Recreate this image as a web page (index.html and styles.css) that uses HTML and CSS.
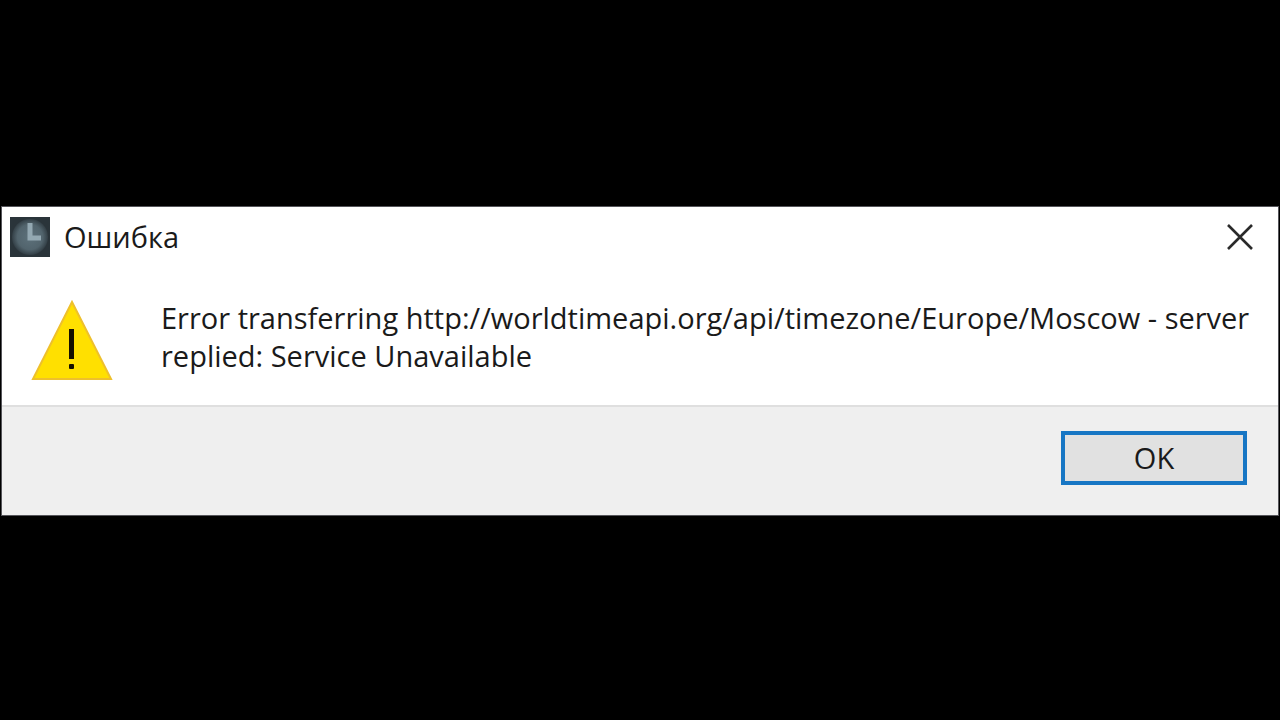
FILE: index.html
```html
<!DOCTYPE html>
<html lang="ru">
<head>
    <meta charset="UTF-8">
    <meta name="viewport" content="width=device-width, initial-scale=1.0">
    <title>Ошибка</title>
    <link rel="stylesheet" href="styles.css">
</head>
<body>

    <div class="dialog" role="alertdialog" aria-labelledby="dialogTitle" aria-describedby="dialogMessage">
        <div class="titlebar">
            <svg class="app-icon" viewBox="0 0 40 40" aria-hidden="true">
                <defs>
                    <radialGradient id="face">
                        <stop offset="0" stop-color="#5d717b"/>
                        <stop offset="0.7" stop-color="#52646d"/>
                        <stop offset="1" stop-color="#333f46"/>
                    </radialGradient>
                </defs>
                <rect width="40" height="40" fill="#2a343a"/>
                <circle cx="20" cy="20" r="18" fill="url(#face)"/>
                <path d="M20 6V21H31" fill="none" stroke="#93a8b2" stroke-width="5"/>
            </svg>
            <h1 class="title" id="dialogTitle">Ошибка</h1>
            <button class="close" type="button" aria-label="Закрыть">
                <svg viewBox="0 0 28 28" aria-hidden="true">
                    <path d="M2 2L26 26M26 2L2 26" fill="none" stroke="#2a2a2a" stroke-width="2.6"/>
                </svg>
            </button>
        </div>

        <div class="content">
            <svg class="warning-icon" viewBox="0 0 84 84" aria-hidden="true">
                <path d="M42 3L81 80H3Z" fill="#ffe000" stroke="#eec02c" stroke-width="2"/>
                <rect x="39" y="30" width="5" height="30" fill="#151000"/>
                <rect x="39" y="65" width="5" height="5" rx="1" fill="#151000"/>
            </svg>
            <p class="message" id="dialogMessage">Error transferring http://worldtimeapi.org/api/timezone/Europe/Moscow - server replied: Service Unavailable</p>
        </div>

        <div class="footer">
            <button class="ok" type="button">OK</button>
        </div>
    </div>

</body>
</html>
```

FILE: styles.css
```css
* {
    box-sizing: border-box;
}
body {
    margin: 0;
    padding-top: 2px;
    min-height: 100vh;
    display: flex;
    align-items: center;
    background: #000;
    color: #1a1a1a;
    font-family: "Open Sans", "Noto Sans", sans-serif;
    font-size: 29px;
}
button {
    font-family: inherit;
    font-size: inherit;
    color: inherit;
    padding: 0;
}
.dialog {
    flex: 1;
    margin: 0 1px;
    background: #fff;
    border: 1px solid #55555a;
}
.titlebar {
    display: flex;
    align-items: center;
    gap: 14px;
    height: 60px;
    padding: 0 24px 0 8px;
}
.app-icon {
    width: 40px;
    height: 40px;
}
.title {
    flex: 1;
    margin: 0;
    font-size: 29px;
    font-weight: normal;
    line-height: 38px;
}
.close {
    width: 28px;
    height: 28px;
    border: none;
    background: none;
}
.close svg {
    display: block;
}
.content {
    display: flex;
    align-items: flex-start;
    gap: 47px;
    padding: 32px 10px 22px 28px;
}
.warning-icon {
    flex: none;
    width: 84px;
    height: 84px;
}
.message {
    margin: 0;
    line-height: 38px;
}
.footer {
    display: flex;
    justify-content: flex-end;
    padding: 24px 31px 30px;
    background: #efefef;
    border-top: 2px solid #dfdfdf;
}
.ok {
    width: 186px;
    height: 54px;
    background: #e1e1e1;
    border: 4px solid #1776c4;
    line-height: 38px;
}
```
